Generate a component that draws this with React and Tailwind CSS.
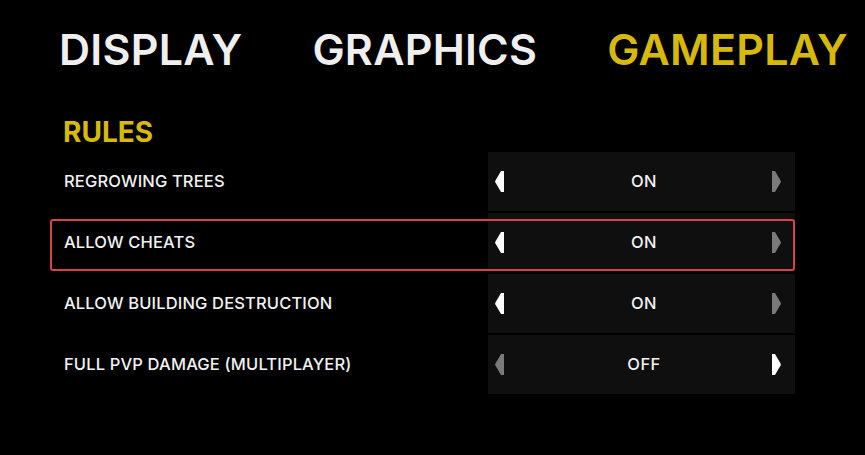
import React from 'react';

const tabs = [
  { label: 'DISPLAY', active: false },
  { label: 'GRAPHICS', active: false },
  { label: 'GAMEPLAY', active: true },
];

const rules = [
  { label: 'REGROWING TREES', value: 'ON', canPrev: true, canNext: false },
  { label: 'ALLOW CHEATS', value: 'ON', canPrev: true, canNext: false, selected: true },
  { label: 'ALLOW BUILDING DESTRUCTION', value: 'ON', canPrev: true, canNext: false },
  { label: 'FULL PVP DAMAGE (MULTIPLAYER)', value: 'OFF', canPrev: false, canNext: true },
];

const Arrow = ({ dir, enabled }) => (
  <svg
    width="9"
    height="21"
    viewBox="0 0 9 21"
    className={`shrink-0 ${dir === 'right' ? 'rotate-180' : ''}`}
    fill={enabled ? '#ffffff' : '#7a7a7a'}
  >
    <path d="M9 0 V21 H6 L0.3 11.2 Q0 10.5 0.3 9.8 L6 0 Z" />
  </svg>
);

const App = () => {
  return (
    <div
      className="w-[865px] h-[455px] bg-black text-[#f2f2f2] overflow-hidden"
      style={{ fontFamily: 'Inter, "Noto Sans", sans-serif' }}
    >
      <nav className="flex gap-[70px] pl-[59px] pt-[28px]">
        {tabs.map((t) => (
          <span
            key={t.label}
            className={`text-[43px] leading-none font-semibold tracking-[0.25px] ${t.active ? 'text-[#d7b90c]' : 'text-[#efefef]'}`}
          >
            {t.label}
          </span>
        ))}
      </nav>

      <h2 className="mt-[47px] pl-[63px] text-[28px] leading-none font-bold text-[#d7b90c]">RULES</h2>

      <div className="mt-[6px] ml-[50px] w-[745px] flex flex-col gap-[2px]">
        {rules.map((r) => (
          <div key={r.label} className="relative flex items-center h-[59px]">
            <span className="pl-[14px] text-[16.5px] font-medium tracking-[0.15px]">{r.label}</span>
            <div className="ml-auto w-[307px] h-full bg-[#0f0f0f] flex items-center pl-[7px] pr-[14px]">
              <Arrow dir="left" enabled={r.canPrev} />
              <span className="flex-1 pl-[12px] text-center text-[16.5px] font-medium tracking-[0.4px]">{r.value}</span>
              <Arrow dir="right" enabled={r.canNext} />
            </div>
            {r.selected && (
              <div className="absolute left-0 right-0 top-[6px] bottom-[1px] border-2 border-[#d6424a] rounded-[3px] pointer-events-none" />
            )}
          </div>
        ))}
      </div>
    </div>
  );
};

export default App;
